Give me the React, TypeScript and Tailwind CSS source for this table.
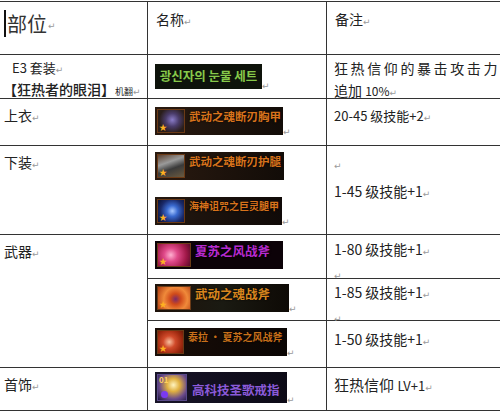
import React from "react";

const FONT = { fontFamily: '"Noto Sans CJK SC", "Noto Sans", sans-serif' };

// Word-style paragraph mark
function Mark({ className = "" }: { className?: string }) {
  return <span className={`text-[9px] text-[#9a9a9a] font-[DejaVu_Sans] ${className}`}>↵</span>;
}

interface ItemProps {
  name: string;
  width: number;
  iconW: number;
  textColor: string;
  barClass: string;
  iconClass: string;
  textSize?: string;
}

function Item({ name, width, iconW, textColor, barClass, iconClass, textSize = "text-[11.5px]" }: ItemProps) {
  return (
    <div className={`flex h-[28px] shrink-0 items-stretch overflow-hidden ${barClass}`} style={{ width }}>
      <div
        className={`relative m-[2px] flex shrink-0 items-end overflow-hidden border border-[#6b3a16] pb-[1px] pl-[1px] ${iconClass}`}
        style={{ width: iconW - 4 }}
      >
        <span className="text-[8px] leading-none text-[#ffb020]">★</span>
      </div>
      <div className="flex items-start pl-[2px] pt-[4px]">
        <span
          className={`whitespace-nowrap font-bold leading-none ${textSize} ${textColor}`}
          style={{ textShadow: "0 0 2px rgba(0,0,0,0.9)" }}
        >
          {name}
        </span>
      </div>
    </div>
  );
}

export default function App() {
  const cell = "border-b border-[#333]";
  return (
    <div className="h-[413px] w-[500px] overflow-hidden bg-white pt-[1px] text-[#222]" style={FONT}>
      <div className="grid grid-cols-[148px_179px_173px] border-t border-[#333]">
        {/* Header */}
        <div className={`${cell} h-[53px] border-r pl-[4px] pt-[8px]`}>
          <div className="flex items-center">
            <span className="mr-[1px] h-[27px] w-[2px] bg-[#111]" />
            <span className="text-[20px] leading-none text-[#333]">部位</span>
            <Mark className="ml-[1px] mt-[6px]" />
          </div>
        </div>
        <div className={`${cell} h-[53px] border-r pl-[8px] pt-[4px]`}>
          <span className="text-[14px]">名称</span>
          <Mark />
        </div>
        <div className={`${cell} h-[53px] pl-[8px] pt-[4px]`}>
          <span className="text-[14px]">备注</span>
          <Mark />
        </div>

        {/* E3 套装 */}
        <div className={`${cell} h-[44px] border-r pl-[3px] pt-[3px] leading-[19px]`}>
          <div className="pl-[9px] text-[13px]">
            E3 套装<Mark />
          </div>
          <div className="whitespace-nowrap text-[14px] font-medium">
            【狂热者的眼泪】<span className="text-[9px] font-normal">机翻</span>
            <Mark />
          </div>
        </div>
        <div className={`${cell} h-[44px] border-r pl-[7px] pt-[9px]`}>
          <div className="flex items-end">
            <div className="flex h-[25px] w-[107px] shrink-0 items-center justify-center bg-[#0e130b]">
              <span className="whitespace-nowrap text-[12.5px] font-bold text-[#86c94a]">광신자의 눈물 세트</span>
            </div>
            <Mark className="-mb-[4px]" />
          </div>
        </div>
        <div className={`${cell} h-[44px] pl-[7px] pt-[2px] text-[14px] leading-[22px]`}>
          <div className="whitespace-nowrap tracking-[2.6px]">狂热信仰的暴击攻击力</div>
          <div>
            追加 <span className="text-[12px]">10%</span>
            <Mark />
          </div>
        </div>

        {/* 上衣 */}
        <div className={`${cell} h-[47px] border-r pl-[4px] pt-[3px]`}>
          <span className="text-[14px]">上衣</span>
          <Mark />
        </div>
        <div className={`${cell} h-[47px] border-r pl-[7px] pt-[8px]`}>
          <div className="flex items-end">
            <Item
              name="武动之魂断刃胸甲"
              width={128}
              iconW={32}
              textColor="text-[#d8731c]"
              barClass="bg-gradient-to-r from-[#2a1a10] to-[#120c08]"
              iconClass="bg-[radial-gradient(circle_at_55%_45%,#8a7cc8_0%,#4a3c6a_35%,#2a1e1a_70%)]"
            />
            <Mark className="-mb-[4px]" />
          </div>
        </div>
        <div className={`${cell} h-[47px] pl-[7px] pt-[3px]`}>
          <span className="text-[13px]">20-45 级技能+2</span>
          <Mark />
        </div>

        {/* 下装 */}
        <div className={`${cell} h-[89px] border-r pl-[4px] pt-[3px]`}>
          <span className="text-[14px]">下装</span>
          <Mark />
        </div>
        <div className={`${cell} h-[89px] border-r pl-[7px] pt-[6px]`}>
          <Item
            name="武动之魂断刃护腿"
            width={129}
            iconW={32}
            textColor="text-[#d8731c]"
            barClass="bg-gradient-to-r from-[#2a1a10] to-[#120c08]"
            iconClass="bg-[linear-gradient(160deg,#5a4030_0%,#9a9a9a_35%,#3a3a3a_60%,#6a5a40_100%)]"
          />
          <div className="mt-[17px] flex items-end">
            <Item
              name="海神诅咒之巨灵腿甲"
              width={127}
              iconW={32}
              textColor="text-[#d8731c]"
              textSize="text-[10px]"
              barClass="bg-gradient-to-r from-[#241810] to-[#100a08]"
              iconClass="bg-[radial-gradient(circle_at_55%_50%,#a8c8ff_0%,#3a6ad0_30%,#1a2a6a_65%,#0a1030_100%)]"
            />
            <Mark className="-mb-[4px]" />
          </div>
        </div>
        <div className={`${cell} h-[89px] pl-[7px] pt-[6px] leading-[20px]`}>
          <Mark />
          <div className="mt-[5px] text-[14px]">
            1-45 级技能+1<Mark />
          </div>
        </div>

        {/* 武器 */}
        <div className={`${cell} row-span-3 border-r pl-[4px] pt-[3px]`}>
          <span className="text-[14px]">武器</span>
          <Mark />
        </div>
        <div className={`${cell} h-[44px] border-r pl-[7px] pt-[6px]`}>
          <Item
            name="夏苏之风战斧"
            width={128}
            iconW={38}
            textColor="text-[#b82ad0]"
            textSize="text-[12.5px]"
            barClass="bg-[#0c0208]"
            iconClass="bg-[radial-gradient(circle_at_40%_50%,#ffb0d0_0%,#e04a8a_30%,#a01848_70%,#5a0a28_100%)]"
          />
        </div>
        <div className={`${cell} h-[44px] pl-[7px] pt-[4px] leading-[20px]`}>
          <div className="text-[14px]">
            1-80 级技能+1<Mark />
          </div>
          <Mark />
        </div>

        <div className={`${cell} h-[42px] border-r pl-[7px] pt-[5px]`}>
          <div className="flex items-end">
            <Item
              name="武动之魂战斧"
              width={134}
              iconW={38}
              textColor="text-[#d8861e]"
              textSize="text-[12.5px]"
              barClass="bg-gradient-to-r from-[#1e120a] via-[#1a1a12] to-[#0e0a06]"
              iconClass="bg-[radial-gradient(circle_at_55%_55%,#7a2a6a_0%,#d04a1a_25%,#f08a3a_55%,#b03a10_100%)]"
            />
            <Mark className="-mb-[4px]" />
          </div>
        </div>
        <div className={`${cell} h-[42px] pl-[7px] pt-[3px] leading-[20px]`}>
          <div className="text-[14px]">
            1-85 级技能+1<Mark />
          </div>
          <Mark />
        </div>

        <div className={`${cell} h-[47px] border-r pl-[7px] pt-[7px]`}>
          <div className="flex items-end">
            <Item
              name="泰拉 · 夏苏之风战斧"
              width={132}
              iconW={31}
              textColor="text-[#c8701a]"
              textSize="text-[10px]"
              barClass="bg-gradient-to-r from-[#1a0e08] to-[#0a0604]"
              iconClass="bg-[radial-gradient(circle_at_45%_50%,#f8c0a0_0%,#d04a2a_35%,#a02a10_70%,#6a1a08_100%)]"
            />
            <Mark className="-mb-[4px]" />
          </div>
        </div>
        <div className={`${cell} h-[47px] pl-[7px] pt-[5px]`}>
          <span className="text-[14px]">1-50 级技能+1</span>
          <Mark />
        </div>

        {/* 首饰 */}
        <div className={`${cell} h-[43px] border-r pl-[4px] pt-[3px]`}>
          <span className="text-[14px]">首饰</span>
          <Mark />
        </div>
        <div className={`${cell} h-[43px] border-r pl-[7px] pt-[4px]`}>
          <div className="flex items-end">
            <div className="flex h-[31px] w-[132px] shrink-0 items-stretch overflow-hidden bg-gradient-to-r from-[#181428] to-[#0c0a16]">
              <div className="relative m-[2px] w-[30px] shrink-0 overflow-hidden border border-[#5a4a8a] bg-[radial-gradient(circle_at_55%_40%,#fff4c0_0%,#e0b040_30%,#6a4a8a_65%,#1a1440_100%)]">
                <span className="absolute left-[1px] top-[1px] text-[8px] font-bold leading-none text-[#ffd060]">01</span>
                <span className="absolute bottom-[2px] left-[3px] h-[7px] w-[7px] rounded-full bg-[#7a3af0]" />
              </div>
              <div className="pl-[3px] pt-[4px]">
                <span className="whitespace-nowrap text-[12.5px] font-bold leading-none text-[#8a5ad8]">高科技圣歌戒指</span>
              </div>
            </div>
            <Mark className="-mb-[4px]" />
          </div>
        </div>
        <div className={`${cell} h-[43px] pl-[7px] pt-[4px]`}>
          <span className="text-[15px]">狂热信仰 </span>
          <span className="text-[13px]">LV+1</span>
          <Mark />
        </div>
      </div>
    </div>
  );
}
